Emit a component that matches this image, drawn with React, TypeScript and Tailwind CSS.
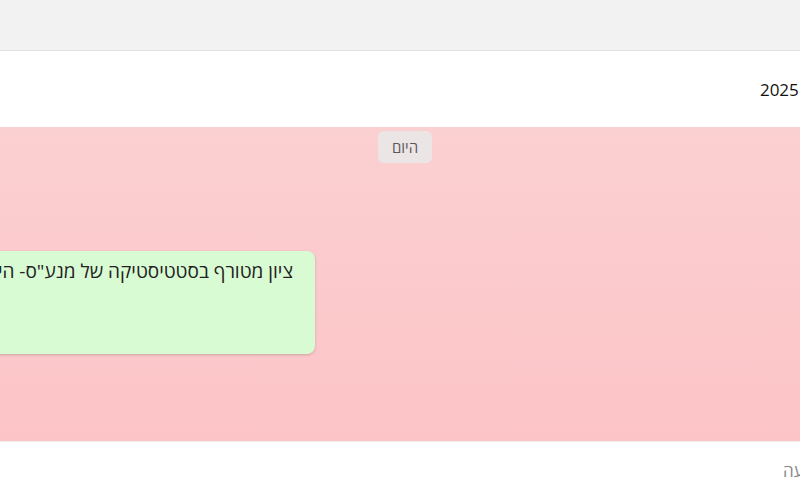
import React from "react";

export default function App() {
  return (
    <div
      dir="rtl"
      className="w-[800px] h-[493px] overflow-hidden flex flex-col bg-white font-['Open_Sans','DejaVu_Sans',sans-serif]"
    >
      <div className="h-[51px] shrink-0 bg-[#f2f2f2] border-b border-[#e2e2e2]" />
      <div className="h-[76px] shrink-0 bg-white flex items-center">
        <span className="mr-[-138px] mt-[2px] text-[17px] text-[#111] whitespace-nowrap">
          יום רביעי, 15 בינואר 2025
        </span>
      </div>
      <div className="h-[314px] shrink-0 bg-gradient-to-b from-[#fbd0d1] to-[#fcc4c7] flex flex-col items-center pt-[4px]">
        <div className="ml-[10px] h-[32px] w-[54px] rounded-md bg-[#ece5e6] flex items-center justify-center text-[15px] text-[#5a5a5a]">
          היום
        </div>
        <div className="self-end mt-[88px] ml-[-40px] w-[355px] h-[103px] rounded-lg bg-[#d9fbd3] shadow-[0_1px_3px_rgba(0,0,0,0.18)] overflow-hidden">
          <div className="pr-[22px] pt-[6px] text-[19px] text-[#222] whitespace-nowrap">
            ציון מטורף בסטטיסטיקה של מנע"ס- היה לי ממש קשה אבל הצלחתי
          </div>
        </div>
      </div>
      <div className="flex-1 bg-white border-t border-[#f3ecec] flex items-center">
        <span className="mr-[-64px] mt-[6px] text-[17px] text-[#888] whitespace-nowrap">
          כתוב הודעה
        </span>
      </div>
    </div>
  );
}
